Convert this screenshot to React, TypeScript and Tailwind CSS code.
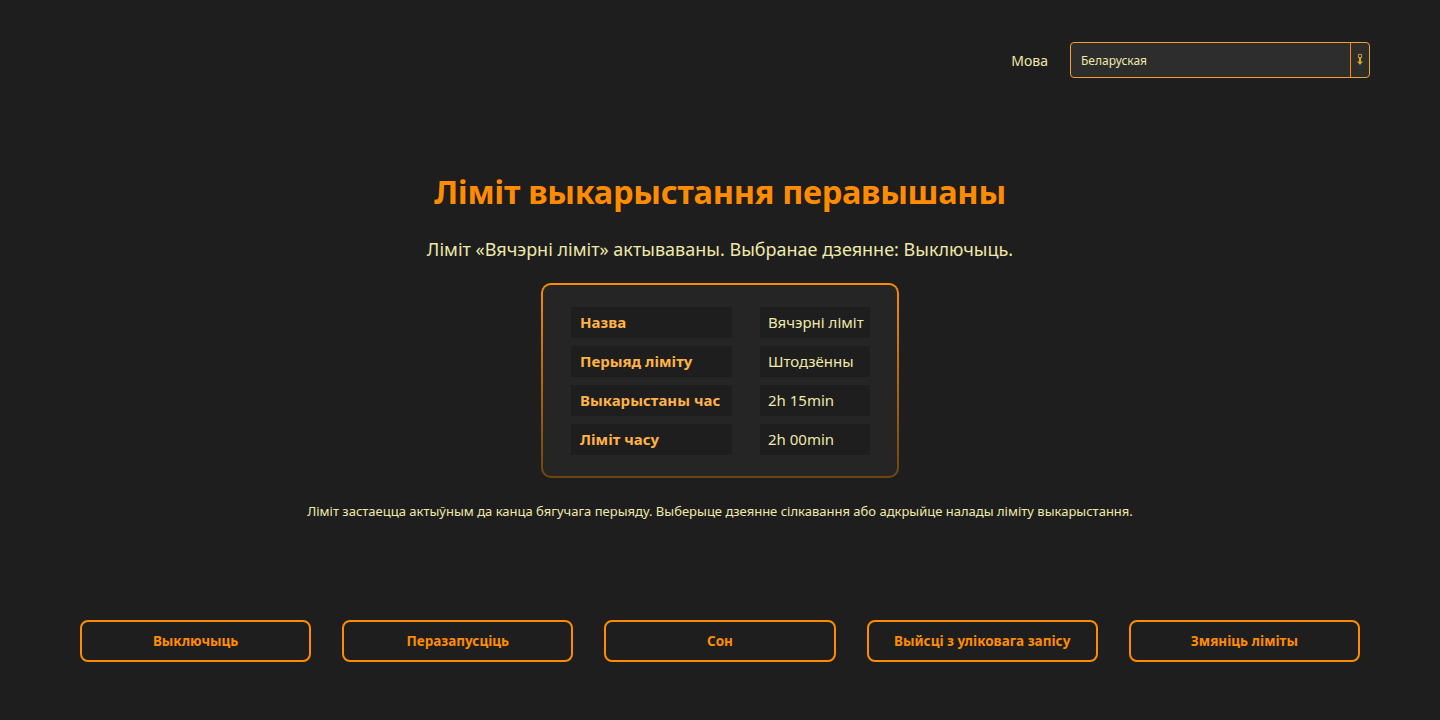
const rows = [
  { label: 'Назва', value: 'Вячэрні ліміт' },
  { label: 'Перыяд ліміту', value: 'Штодзённы' },
  { label: 'Выкарыстаны час', value: '2h 15min' },
  { label: 'Ліміт часу', value: '2h 00min' },
];

const actions = ['Выключыць', 'Перазапусціць', 'Сон', 'Выйсці з уліковага запісу', 'Змяніць ліміты'];

function ArrowGlyph() {
  return (
    <svg width="8" height="12" viewBox="0 0 8 12" fill="none">
      <rect x="2.5" y="0.5" width="3" height="3" stroke="#c8961e" strokeWidth="1" />
      <path d="M4 3.5V9" stroke="#d9a520" strokeWidth="2" />
      <path d="M1 7.5L4 11L7 7.5Z" fill="#d9a520" />
    </svg>
  );
}

export default function App() {
  return (
    <div
      className="w-full h-[720px] bg-[#1e1e1e] flex flex-col overflow-hidden"
      style={{ fontFamily: '"Noto Sans", "Open Sans", sans-serif' }}
    >
      {/* Language picker */}
      <div className="flex justify-end items-center gap-[22px] pt-[42px] pr-[70px]">
        <span className="text-[14px] text-[#eee8aa]">Мова</span>
        <div className="w-[300px] h-[36px] flex rounded-[4px] border border-[#f5a030] bg-[#2d2d2d]">
          <span className="flex-1 flex items-center pl-[10px] pt-[1px] text-[12px] text-[#eee8aa]">Беларуская</span>
          <span className="w-[19px] flex items-center justify-center border-l border-[#ff8c00]">
            <ArrowGlyph />
          </span>
        </div>
      </div>

      {/* Message */}
      <div className="flex flex-col items-center">
        <h1 className="mt-[94px] text-[32.5px] leading-[40px] font-bold text-[#ff8c00] tracking-[-0.3px]">
          Ліміт выкарыстання перавышаны
        </h1>
        <p className="mt-[25px] text-[18px] leading-[24px] text-[#eee8aa]">
          Ліміт «Вячэрні ліміт» актываваны. Выбранае дзеянне: Выключыць.
        </p>

        <div className="mt-[22px] rounded-[10px] p-[2px] bg-gradient-to-b from-[#ff8c00] to-[#6e4410]">
          <div className="rounded-[8px] bg-[#252525] pl-[28px] pr-[27px] pt-[22px] pb-[21px] grid grid-cols-[161px_110px] gap-x-[28px] gap-y-[8px]">
            {rows.map((row) => (
              <div key={row.label} className="contents">
                <div className="h-[31px] bg-[#1e1e1e] flex items-center pl-[9px] text-[15px] font-bold text-[#ffb347] whitespace-nowrap">
                  {row.label}
                </div>
                <div className="h-[31px] bg-[#1e1e1e] flex items-center pl-[8px] text-[15px] text-[#eee8aa] whitespace-nowrap">
                  {row.value}
                </div>
              </div>
            ))}
          </div>
        </div>

        <p className="mt-[24px] text-[13px] leading-[18px] text-[#eee8aa]">
          Ліміт застаецца актыўным да канца бягучага перыяду. Выберыце дзеянне сілкавання або адкрыйце налады ліміту выкарыстання.
        </p>
      </div>

      {/* Actions */}
      <div className="mt-auto mb-[58px] px-[80px] grid grid-cols-5 gap-[31px]">
        {actions.map((a) => (
          <button
            key={a}
            className="h-[42px] rounded-[8px] border-2 border-[#ff8c00] bg-transparent text-[13.5px] font-bold text-[#ff8c00]"
          >
            {a}
          </button>
        ))}
      </div>
    </div>
  );
}
